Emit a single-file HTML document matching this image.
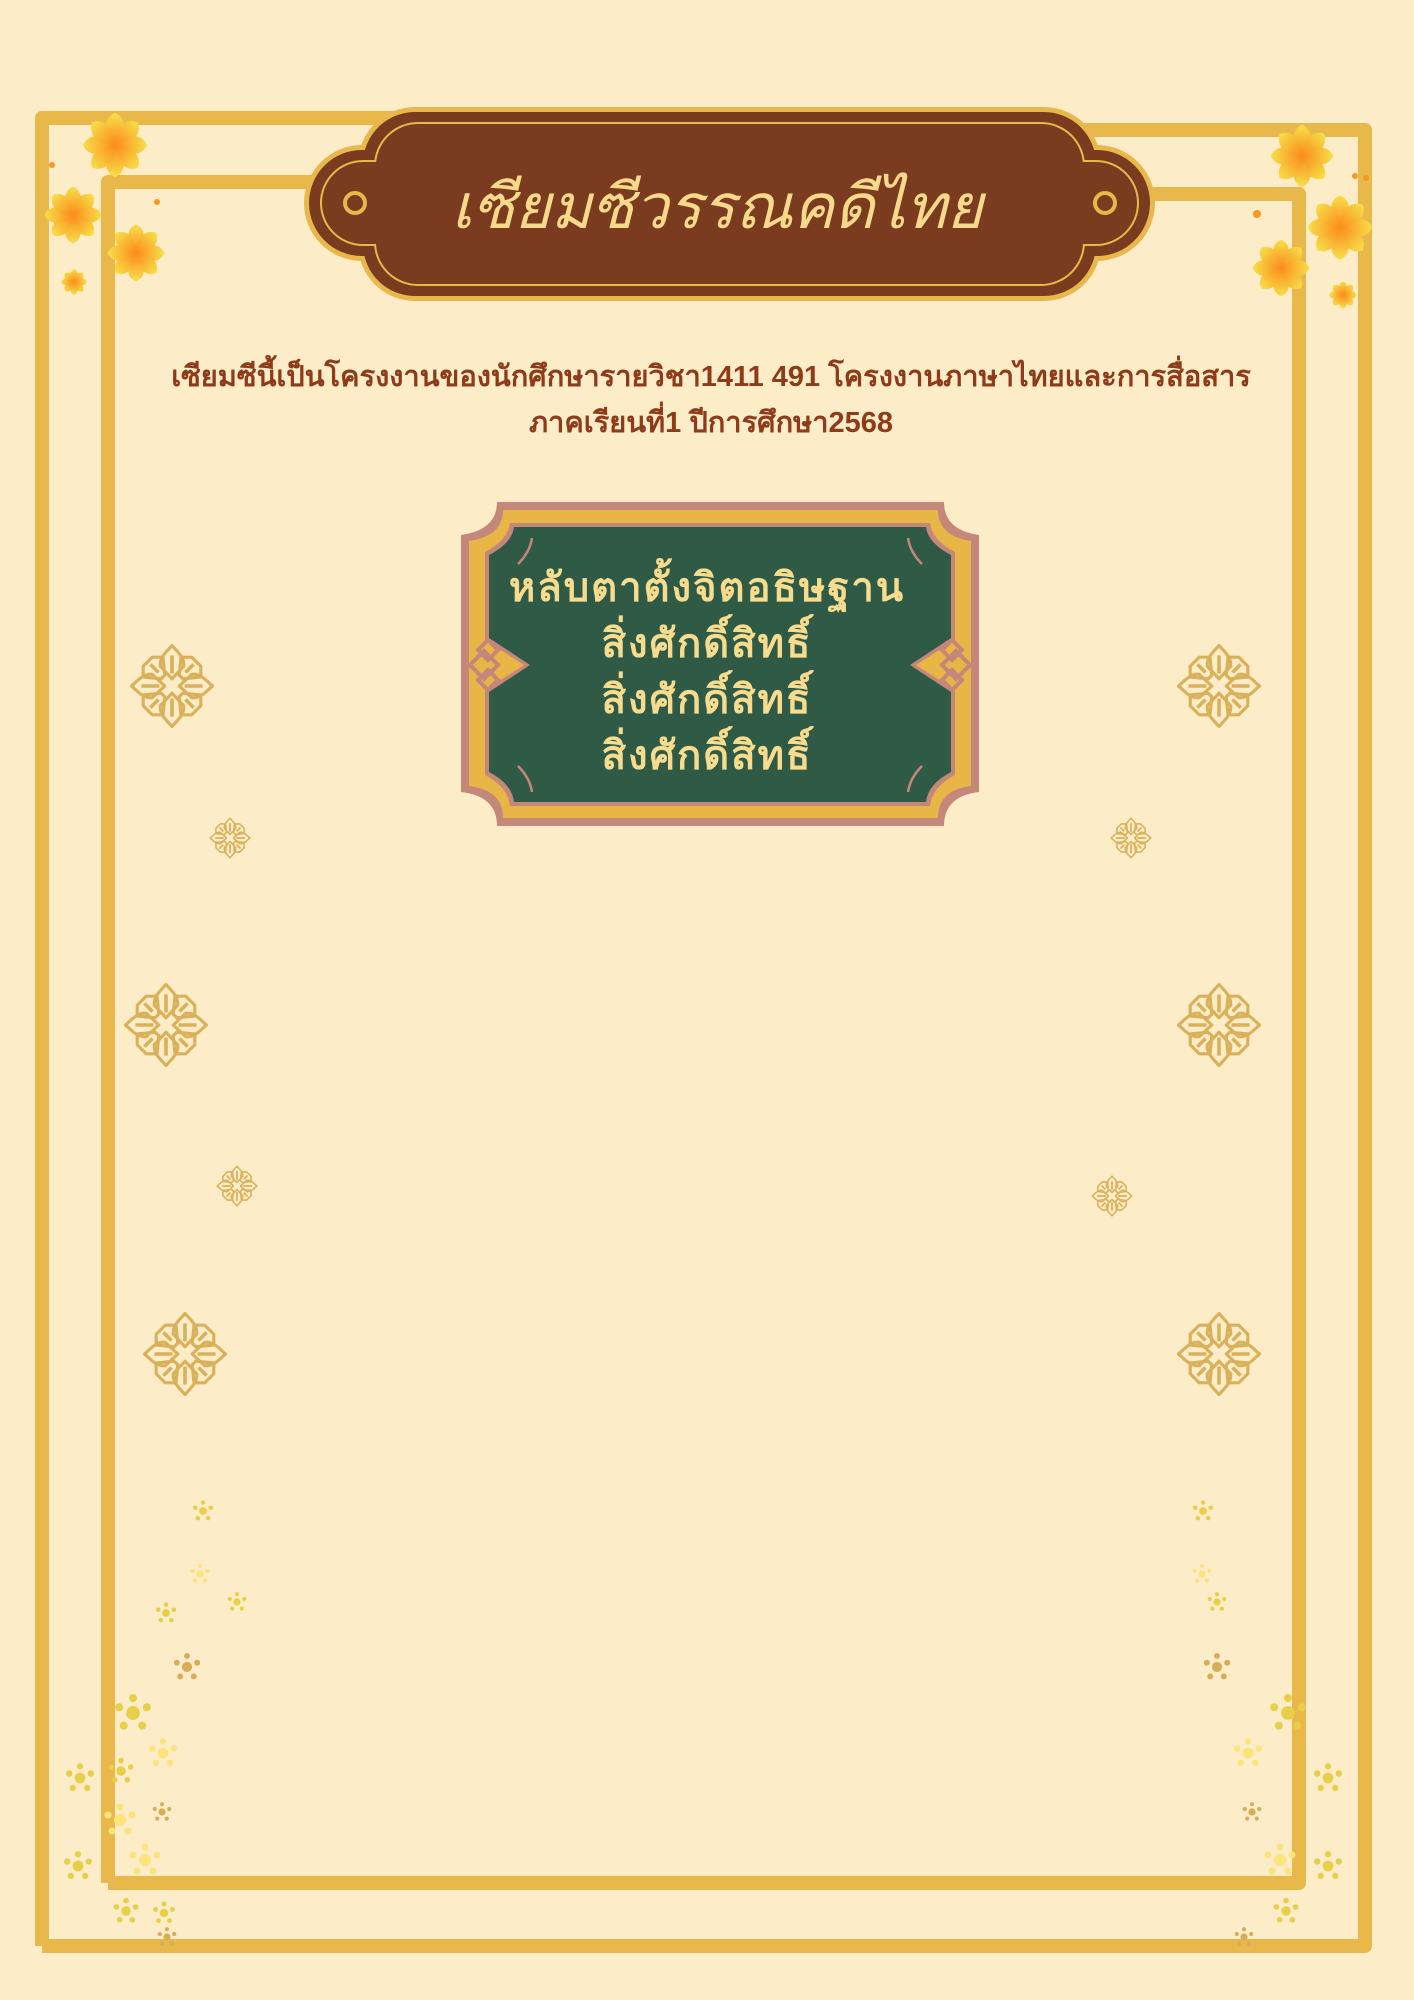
<!DOCTYPE html>
<html><head><meta charset="utf-8"><style>
html,body{margin:0;padding:0;background:#fdecc8;}
body{width:1414px;height:2000px;position:relative;overflow:hidden;font-family:"Liberation Sans","DejaVu Sans",sans-serif;}
svg{position:absolute;left:0;top:0;}
.t{position:absolute;left:0;width:1414px;text-align:center;}
</style></head><body>
<svg width="1414" height="2000" viewBox="0 0 1414 2000">
<defs>
<linearGradient id="pg" x1="0" y1="0" x2="0" y2="1"><stop offset="0" stop-color="#f7e04a"/><stop offset="1" stop-color="#fb8c1c"/></linearGradient>
<symbol id="of" viewBox="-50 -50 100 100" overflow="visible">
<g fill="url(#pg)">
<path id="op" d="M0,0 C-16,-15 -18,-38 0,-46 C18,-38 16,-15 0,0Z"/>
<path transform="rotate(45)" d="M0,0 C-16,-15 -18,-38 0,-46 C18,-38 16,-15 0,0Z"/>
<path transform="rotate(90)" d="M0,0 C-16,-15 -18,-38 0,-46 C18,-38 16,-15 0,0Z"/>
<path transform="rotate(135)" d="M0,0 C-16,-15 -18,-38 0,-46 C18,-38 16,-15 0,0Z"/>
<path transform="rotate(180)" d="M0,0 C-16,-15 -18,-38 0,-46 C18,-38 16,-15 0,0Z"/>
<path transform="rotate(225)" d="M0,0 C-16,-15 -18,-38 0,-46 C18,-38 16,-15 0,0Z"/>
<path transform="rotate(270)" d="M0,0 C-16,-15 -18,-38 0,-46 C18,-38 16,-15 0,0Z"/>
<path transform="rotate(315)" d="M0,0 C-16,-15 -18,-38 0,-46 C18,-38 16,-15 0,0Z"/>
</g></symbol>
<symbol id="lf" viewBox="-50 -50 100 100" overflow="visible">
<g fill="none" stroke="#d9b15a" stroke-width="3.5" stroke-linejoin="round">
<g id="pp"><path d="M0,-45 C6,-38 14,-32 13,-22 L0,-8 L-13,-22 C-14,-32 -6,-38 0,-45Z"/><path d="M0,-34 L0,-14" stroke-width="4"/></g>
<use href="#pp" transform="rotate(90)"/><use href="#pp" transform="rotate(180)"/><use href="#pp" transform="rotate(270)"/>
<g id="dp"><path d="M8,-12 L10,-32 L22,-32 L32,-22 L32,-10 L12,-8Z"/><path d="M15,-15 L24,-24" stroke-width="4"/></g>
<use href="#dp" transform="rotate(90)"/><use href="#dp" transform="rotate(180)"/><use href="#dp" transform="rotate(270)"/>
</g></symbol>
<symbol id="dc" viewBox="-20 -20 40 40" overflow="visible">
<circle r="6"/><circle cx="0" cy="-13" r="3.5"/><circle cx="12" cy="-5" r="3.5"/><circle cx="8" cy="11" r="3.5"/><circle cx="-8" cy="11" r="3.5"/><circle cx="-12" cy="-5" r="3.5"/>
</symbol>
</defs>
<g fill="none" stroke="#e9b84b" stroke-width="14" stroke-linejoin="round">
<path d="M42,1946 L42,118 L400,118"/>
<path d="M1000,130 L1365,130 L1365,1946 L42,1946"/>
<path d="M108,1883 L108,182 L400,182"/>
<path d="M1000,194 L1299,194 L1299,1883 L108,1883"/>
</g>
<use href="#of" x="80" y="110" width="70" height="70"/>
<use href="#of" x="42" y="180" width="62" height="70"/>
<use href="#of" x="105" y="220" width="62" height="66"/>
<use href="#of" x="60" y="268" width="28" height="28"/>
<use href="#of" x="1268" y="122" width="68" height="68"/>
<use href="#of" x="1305" y="190" width="70" height="75"/>
<use href="#of" x="1250" y="235" width="62" height="66"/>
<use href="#of" x="1328" y="280" width="30" height="30"/>
<g fill="#f49a22"><circle cx="157" cy="202" r="3"/><circle cx="52" cy="165" r="3"/><circle cx="1257" cy="214" r="4"/><circle cx="1355" cy="176" r="3"/><circle cx="1366" cy="178" r="3"/></g>
<g stroke="#e9b84b" stroke-width="10" fill="#7a3b1f">
<rect x="363" y="112" width="733" height="184" rx="52"/>
<rect x="309" y="150" width="841" height="106" rx="53"/>
</g>
<g fill="#7a3b1f"><rect x="363" y="112" width="733" height="184" rx="52"/><rect x="309" y="150" width="841" height="106" rx="53"/></g>
<g stroke="#e9b84b" stroke-width="4" fill="#7a3b1f">
<rect x="376" y="124" width="707" height="160" rx="42"/>
<rect x="322" y="162" width="815" height="82" rx="41"/>
</g>
<g fill="#7a3b1f"><rect x="376" y="124" width="707" height="160" rx="42"/><rect x="322" y="162" width="815" height="82" rx="41"/></g>
<g fill="none" stroke="#e9b84b" stroke-width="4"><circle cx="355" cy="203" r="10"/><circle cx="1105" cy="203" r="10"/></g>
<path d="M497,502 L944,502 Q944,530 979,535 L979,792 Q944,796 944,826 L497,826 Q497,796 461,792 L461,535 Q497,530 497,502Z" fill="#c4877a"/>
<path d="M503,510 L938,510 Q938,536 971,541 L971,786 Q938,790 938,818 L503,818 Q503,790 469,786 L469,541 Q503,536 503,510Z" fill="#e8b547"/>
<path d="M510,523 L930,523 Q932,540 955,552 L955,640 L916,665 L955,690 L955,775 Q932,787 930,806 L510,806 Q508,787 485,775 L485,690 L524,665 L485,640 L485,552 Q508,540 510,523Z" fill="#c4877a"/>
<path d="M514,527 L926,527 Q928,543 951,555 L951,638 L910,665 L951,692 L951,772 Q928,784 926,802 L514,802 Q512,784 489,772 L489,692 L530,665 L489,638 L489,555 Q512,543 514,527Z" fill="#2e5a46"/>
<g fill="none" stroke="#c4877a" stroke-width="2.5"><path d="M518,564 Q530,552 532,538"/><path d="M922,564 Q910,552 908,538"/><path d="M518,766 Q530,778 532,792"/><path d="M922,766 Q910,778 908,792"/></g>
<g fill="none" stroke="#c4877a" stroke-width="4"><path d="M470,665 l14,-14 l14,14 l-14,14Z M478,650 l10,-10 l10,10 l-10,10Z M478,680 l10,-10 l10,10 l-10,10Z"/><path d="M970,665 l-14,-14 l-14,14 l14,14Z M962,650 l-10,-10 l-10,10 l10,10Z M962,680 l-10,-10 l-10,10 l10,10Z"/></g>
<use href="#lf" x="127" y="641" width="90" height="90"/>
<use href="#lf" x="1174" y="641" width="90" height="90"/>
<use href="#lf" x="121" y="980" width="90" height="90"/>
<use href="#lf" x="1174" y="980" width="90" height="90"/>
<use href="#lf" x="140" y="1309" width="90" height="90"/>
<use href="#lf" x="1174" y="1309" width="90" height="90"/>
<use href="#lf" x="208" y="816" width="44" height="44"/>
<use href="#lf" x="1109" y="816" width="44" height="44"/>
<use href="#lf" x="215" y="1164" width="44" height="44"/>
<use href="#lf" x="1090" y="1174" width="44" height="44"/>
<g fill="#e8cf48"><use href="#dc" x="190" y="1498" width="26" height="26"/><use href="#dc" x="225" y="1590" width="24" height="24"/><use href="#dc" x="153" y="1600" width="26" height="26"/><use href="#dc" x="110" y="1690" width="46" height="46"/><use href="#dc" x="105" y="1755" width="32" height="32"/><use href="#dc" x="62" y="1760" width="36" height="36"/><use href="#dc" x="60" y="1848" width="36" height="36"/><use href="#dc" x="110" y="1895" width="32" height="32"/><use href="#dc" x="150" y="1899" width="28" height="28"/><use href="#dc" x="1265" y="1690" width="46" height="46"/><use href="#dc" x="1310" y="1760" width="36" height="36"/><use href="#dc" x="1310" y="1848" width="36" height="36"/><use href="#dc" x="1270" y="1895" width="32" height="32"/><use href="#dc" x="1205" y="1590" width="24" height="24"/><use href="#dc" x="1190" y="1498" width="26" height="26"/></g>
<g fill="#fbe47a"><use href="#dc" x="188" y="1562" width="24" height="24"/><use href="#dc" x="145" y="1735" width="36" height="36"/><use href="#dc" x="100" y="1800" width="40" height="40"/><use href="#dc" x="125" y="1840" width="40" height="40"/><use href="#dc" x="1230" y="1735" width="36" height="36"/><use href="#dc" x="1260" y="1840" width="40" height="40"/><use href="#dc" x="1190" y="1562" width="24" height="24"/></g>
<g fill="#d6ae5a"><use href="#dc" x="170" y="1650" width="34" height="34"/><use href="#dc" x="150" y="1800" width="24" height="24"/><use href="#dc" x="155" y="1925" width="24" height="24"/><use href="#dc" x="1200" y="1650" width="34" height="34"/><use href="#dc" x="1240" y="1800" width="24" height="24"/><use href="#dc" x="1232" y="1925" width="24" height="24"/></g>
</svg>
<div class="t" style="top:168px;font-size:62px;font-style:italic;color:#f7d98c;left:10px;line-height:80px;">เซียมซีวรรณคดีไทย</div>
<div class="t" style="top:354px;font-size:29px;font-weight:bold;color:#8d3b1a;line-height:46px;left:4px;">เซียมซีนี้เป็นโครงงานของนักศึกษารายวิชา1411 491 โครงงานภาษาไทยและการสื่อสาร<br>ภาคเรียนที่1 ปีการศึกษา2568</div>
<div class="t" style="top:560px;font-size:40px;font-weight:bold;color:#f7dc8e;line-height:56px;left:0;letter-spacing:2px;">หลับตาตั้งจิตอธิษฐาน<br>สิ่งศักดิ์สิทธิ์<br>สิ่งศักดิ์สิทธิ์<br>สิ่งศักดิ์สิทธิ์</div>
</body></html>
